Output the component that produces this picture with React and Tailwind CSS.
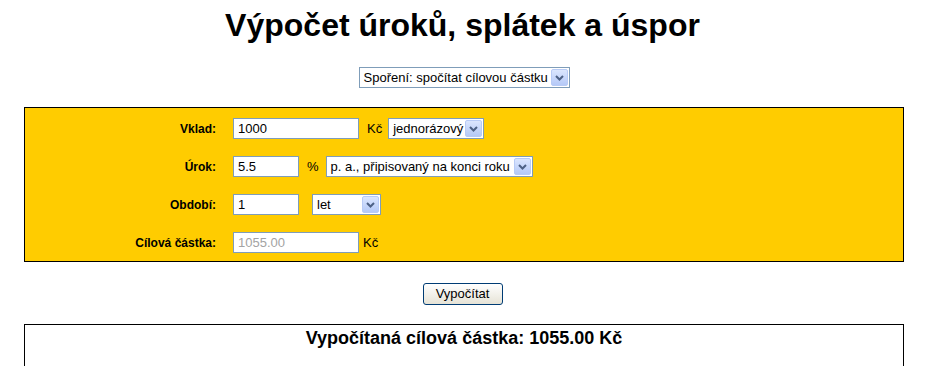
import React from 'react'

const font = { fontFamily: '"Liberation Sans", Arial, sans-serif' }

function Arrow() {
  return (
    <span className="flex h-[17px] w-[17px] items-center justify-center rounded-[2px] border border-[#b8cbf6] bg-gradient-to-b from-[#dbe6fe] to-[#b5c9f7]">
      <svg width="9" height="6" viewBox="0 0 9 6">
        <polyline points="1,1 4.5,4.5 8,1" fill="none" stroke="#4d6185" strokeWidth="2" />
      </svg>
    </span>
  )
}

function Select({ value, width }) {
  return (
    <div className={`flex h-[21px] items-center justify-between border border-[#7f9db9] bg-white pl-[4px] pr-[1px] text-[13px] text-black ${width}`}>
      <span className="whitespace-nowrap">{value}</span>
      <Arrow />
    </div>
  )
}

function Input({ value, width, disabled }) {
  return (
    <div className={`flex h-[21px] items-center border border-[#7f9db9] bg-white pl-[4px] text-[13px] ${disabled ? 'text-[#a3a3a3]' : 'text-black'} ${width}`}>
      {value}
    </div>
  )
}

function Label({ children }) {
  return <div className="text-right text-[12px] font-bold text-black">{children}</div>
}

export default function App() {
  return (
    <div className="h-[366px] w-[925px] overflow-hidden bg-white" style={font}>
      <h1 className="pt-[6px] text-center text-[32px] font-bold leading-[38px] text-black">
        Výpočet úroků, splátek a úspor
      </h1>

      <div className="mt-[23px] flex justify-center pl-[3px]">
        <Select value="Spoření: spočítat cílovou částku" width="w-[211px]" />
      </div>

      <div className="ml-[24px] mt-[19px] w-[880px] border border-black bg-[#ffcc00] pb-[8px] pt-[10px]">
        <div className="grid grid-cols-[191px_auto] items-center gap-x-[17px] gap-y-[17px]">
          <Label>Vklad:</Label>
          <div className="flex items-center">
            <Input value="1000" width="w-[126px]" />
            <span className="ml-[8px] text-[13px] text-black">Kč</span>
            <div className="ml-[6px]">
              <Select value="jednorázový" width="w-[96px]" />
            </div>
          </div>

          <Label>Úrok:</Label>
          <div className="flex items-center">
            <Input value="5.5" width="w-[66px]" />
            <span className="ml-[8px] text-[13px] text-black">%</span>
            <div className="ml-[7px]">
              <Select value="p. a., připisovaný na konci roku" width="w-[207px]" />
            </div>
          </div>

          <Label>Období:</Label>
          <div className="flex items-center">
            <Input value="1" width="w-[66px]" />
            <div className="ml-[13px]">
              <Select value="let" width="w-[69px]" />
            </div>
          </div>

          <Label>Cílová částka:</Label>
          <div className="flex items-center">
            <Input value="1055.00" width="w-[126px]" disabled />
            <span className="ml-[4px] text-[13px] text-black">Kč</span>
          </div>
        </div>
      </div>

      <div className="mt-[21px] flex justify-center">
        <button className="h-[22px] w-[80px] rounded-[3px] border border-[#003c74] bg-gradient-to-b from-white to-[#e6e3d6] text-[13px] text-black">
          Vypočítat
        </button>
      </div>

      <div className="ml-[24px] mt-[19px] h-[80px] w-[880px] border border-black">
        <h3 className="pt-[2px] text-center text-[18px] font-bold leading-[22px] text-black">
          Vypočítaná cílová částka: 1055.00 Kč
        </h3>
      </div>
    </div>
  )
}
